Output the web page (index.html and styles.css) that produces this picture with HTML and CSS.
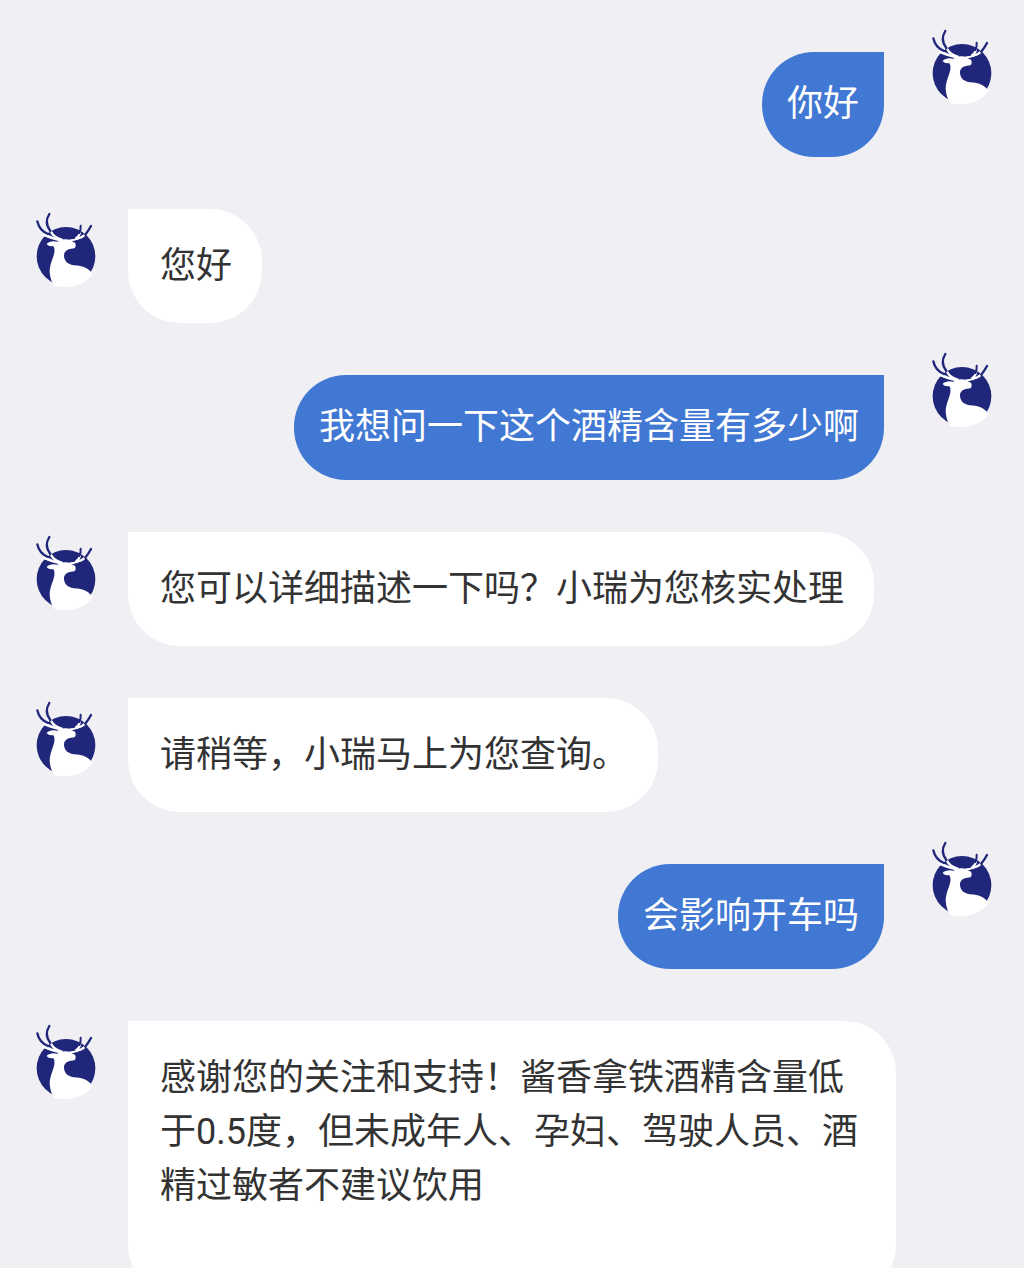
FILE: index.html
```
<!DOCTYPE html>
<html lang="zh-CN">
<head>
    <meta charset="UTF-8">
    <meta name="viewport" content="width=device-width, initial-scale=1">
    <title>在线客服</title>
    <link rel="stylesheet" href="styles.css">
</head>
<body>
<svg class="sprite" aria-hidden="true">
    <symbol id="deer" viewBox="0 18 240 252">
        <circle cx="126" cy="160" r="88" fill="#20267a"/>
        <!-- body -->
        <path fill="#fff" d="M68 123 C74 114 90 113 101 116 C112 107 128 107 137 112 L153 119 C156 124 156 132 151 136 L137 138 C125 141 119 149 120 160 C122 177 134 185 150 187 C178 189 196 196 206 214 C182 246 145 258 92 250 C84 240 78 225 77 206 C77 184 88 165 91 149 C92 138 91 132 87 129 C80 131 73 129 68 123 Z"/>
        <!-- antlers -->
        <g fill="none" stroke="#fff" stroke-linecap="round">
            <path stroke-width="8" d="M60 94 Q84 107 114 113"/>
            <path stroke-width="7" d="M82 88 Q90 103 113 110"/>
            <path stroke-width="6" d="M132 113 Q165 111 184 94 M155 107 Q166 100 168 90"/>
        </g>
        <g fill="none" stroke="#20267a" stroke-linecap="round">
            <path stroke-width="7" d="M40 55 C44 74 56 87 72 93"/>
            <path stroke-width="7" d="M76 33 C64 52 67 69 79 84"/>
            <path stroke-width="6" d="M170 68 Q171 80 166 90"/>
            <path stroke-width="7" d="M201 69 Q193 84 183 96"/>
        </g>
        <path fill="none" stroke="#fff" stroke-width="5" stroke-linecap="round" d="M58 96 Q72 103 88 106 M158 108 Q172 105 180 99"/>
    </symbol>
</svg>
<main class="chat">
    <div class="message user">
        <p class="bubble">你好</p>
        <svg class="avatar" role="img" aria-label="用户"><use href="#deer"/></svg>
    </div>
    <div class="message service">
        <svg class="avatar" role="img" aria-label="客服"><use href="#deer"/></svg>
        <p class="bubble">您好</p>
    </div>
    <div class="message user">
        <p class="bubble">我想问一下这个酒精含量有多少啊</p>
        <svg class="avatar" role="img" aria-label="用户"><use href="#deer"/></svg>
    </div>
    <div class="message service">
        <svg class="avatar" role="img" aria-label="客服"><use href="#deer"/></svg>
        <p class="bubble">您可以详细描述一下吗？小瑞为您核实处理</p>
    </div>
    <div class="message service">
        <svg class="avatar" role="img" aria-label="客服"><use href="#deer"/></svg>
        <p class="bubble">请稍等，小瑞马上为您查询。</p>
    </div>
    <div class="message user">
        <p class="bubble">会影响开车吗</p>
        <svg class="avatar" role="img" aria-label="用户"><use href="#deer"/></svg>
    </div>
    <div class="message service">
        <svg class="avatar" role="img" aria-label="客服"><use href="#deer"/></svg>
        <p class="bubble">感谢您的关注和支持！酱香拿铁酒精含量低于0.5度，但未成年人、孕妇、驾驶人员、酒精过敏者不建议饮用<br><br></p>
    </div>
</main>
</body>
</html>
```
FILE: styles.css
```
body,p{
    margin: 0;
    padding: 0;
}
body{
    background-color: #efeff4;
    color: #333;
    font-family: Roboto, "Noto Sans CJK SC", sans-serif;
    font-size: 36px;
    line-height: 54px;
}
.sprite{
    display: none;
}
.chat{
    box-sizing: border-box;
    height: 100vh;
    padding: 0 24px;
    overflow: hidden;
}
.message{
    display: flex;
    align-items: flex-start;
    padding-top: 26px;
}
.avatar{
    flex: none;
    width: 80px;
    height: 84px;
}
.bubble{
    box-sizing: border-box;
    max-width: 75vw;
}
.user{
    justify-content: flex-end;
    gap: 36px;
}
.user .bubble{
    margin-top: 26px;
    padding: 25px 25px 26px;
    border-radius: 52px 0 52px 52px;
    background-color: #4178d3;
    color: #fff;
}
.service{
    gap: 24px;
    padding-top: 52px;
}
.service .bubble{
    padding: 30px 30px 30px 32px;
    border-radius: 0 52px 52px 52px;
    background-color: #fff;
}
```
